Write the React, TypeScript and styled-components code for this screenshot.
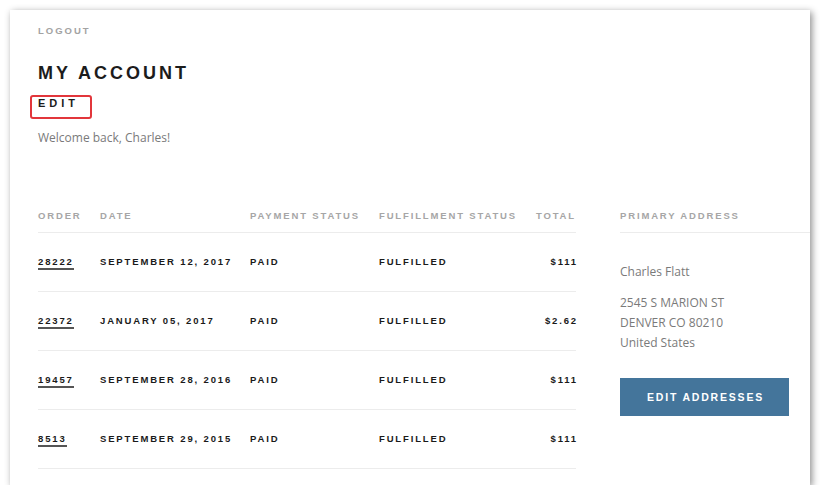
import React from 'react';
import styled, { createGlobalStyle } from 'styled-components';

const GlobalStyle = createGlobalStyle`
  html, body {
    margin: 0;
    padding: 0;
    background: #fff;
    overflow: hidden;
  }
`;

const Frame = styled.div`
  margin: 10px 0 0 10px;
  width: 800px;
  height: 475px;
  background: #fff;
  box-shadow: 2px 2px 7px rgba(0, 0, 0, 0.45);
  overflow: hidden;
  padding: 14px 0 0 28px;
  box-sizing: border-box;
  font-family: "Liberation Sans", Arial, sans-serif;
  color: #1f1f1f;
`;

const Caps = styled.div<{ $size?: number; $spacing?: number; $color?: string }>`
  font-size: ${p => p.$size ?? 9.5}px;
  letter-spacing: ${p => p.$spacing ?? 1.85}px;
  font-weight: 700;
  text-transform: uppercase;
  color: ${p => p.$color ?? '#1a1a1a'};
  line-height: 12px;
  white-space: nowrap;
`;

const Logout = styled(Caps)`
  color: #a3a3a3;
  letter-spacing: 2px;
  margin-top: 1px;
`;

const Title = styled.h1`
  margin: 25px 0 0;
  font-size: 18px;
  line-height: 22px;
  letter-spacing: 3px;
  font-weight: 700;
  color: #1c1c1c;
`;

const EditLink = styled.span`
  position: relative;
  display: inline-block;
  margin-top: 12px;
  font-size: 11px;
  line-height: 14px;
  letter-spacing: 4px;
  font-weight: 700;
  color: #1c1c1c;

  &::after {
    content: '';
    position: absolute;
    left: -8px;
    top: -1px;
    width: 62px;
    height: 24px;
    box-sizing: border-box;
    border: 2px solid #e2363b;
    border-radius: 3px;
  }
`;

const Welcome = styled.p`
  margin: 17px 0 0;
  font-family: "Open Sans", sans-serif;
  font-size: 12px;
  line-height: 20px;
  color: #7a7a7a;
`;

const Columns = styled.div`
  display: flex;
  gap: 44px;
  margin-top: 62px;
`;

const Orders = styled.div`
  width: 538px;
  flex: none;
`;

const Row = styled.div<{ $head?: boolean }>`
  display: grid;
  grid-template-columns: 62px 150px 129px 1fr auto;
  height: ${p => (p.$head ? '22px' : '58px')};
  align-items: ${p => (p.$head ? 'start' : 'center')};
  border-bottom: 1px solid #ececec;
`;

const HeadCell = styled(Caps)<{ $right?: boolean }>`
  color: #a6a6a6;
  text-align: ${p => (p.$right ? 'right' : 'left')};
`;

const Cell = styled(Caps)<{ $right?: boolean }>`
  text-align: ${p => (p.$right ? 'right' : 'left')};
  margin-right: ${p => (p.$right ? '-2px' : '0')};
`;

const OrderLink = styled.span`
  display: inline-block;
  border-bottom: 2px solid #555;
  margin-top: 2px;
`;

const Address = styled.div`
  flex: 1;
`;

const AddressHead = styled.div`
  height: 22px;
  border-bottom: 1px solid #ececec;
`;

const AddressText = styled.p<{ $gap: number }>`
  margin: ${p => p.$gap}px 0 0;
  font-family: "Open Sans", sans-serif;
  font-size: 12px;
  line-height: 20px;
  color: #7a7a7a;
`;

const Button = styled.button`
  display: block;
  margin-top: 25px;
  width: 169px;
  height: 38px;
  border: none;
  background: #44759b;
  color: #fff;
  font-family: "Liberation Sans", Arial, sans-serif;
  font-weight: 700;
  font-size: 10.5px;
  letter-spacing: 1.8px;
  padding: 0 0 0 2px;
  cursor: pointer;
`;

const orders = [
  { id: '28222', date: 'September 12, 2017', total: '$111' },
  { id: '22372', date: 'January 05, 2017', total: '$2.62' },
  { id: '19457', date: 'September 28, 2016', total: '$111' },
  { id: '8513', date: 'September 29, 2015', total: '$111' },
];

export default function App() {
  return (
    <>
      <GlobalStyle />
      <Frame>
        <Logout>Logout</Logout>
        <Title>MY ACCOUNT</Title>
        <EditLink>EDIT</EditLink>
        <Welcome>Welcome back, Charles!</Welcome>

        <Columns>
          <Orders>
            <Row $head>
              <HeadCell>Order</HeadCell>
              <HeadCell>Date</HeadCell>
              <HeadCell>Payment Status</HeadCell>
              <HeadCell>Fulfillment Status</HeadCell>
              <HeadCell $right>Total</HeadCell>
            </Row>
            {orders.map(o => (
              <Row key={o.id}>
                <Cell><OrderLink>{o.id}</OrderLink></Cell>
                <Cell>{o.date}</Cell>
                <Cell>Paid</Cell>
                <Cell>Fulfilled</Cell>
                <Cell $right>{o.total}</Cell>
              </Row>
            ))}
          </Orders>

          <Address>
            <AddressHead>
              <HeadCell>Primary Address</HeadCell>
            </AddressHead>
            <AddressText $gap={29}>Charles Flatt</AddressText>
            <AddressText $gap={11}>
              2545 S MARION ST<br />
              DENVER CO 80210<br />
              United States
            </AddressText>
            <Button>EDIT ADDRESSES</Button>
          </Address>
        </Columns>
      </Frame>
    </>
  );
}
